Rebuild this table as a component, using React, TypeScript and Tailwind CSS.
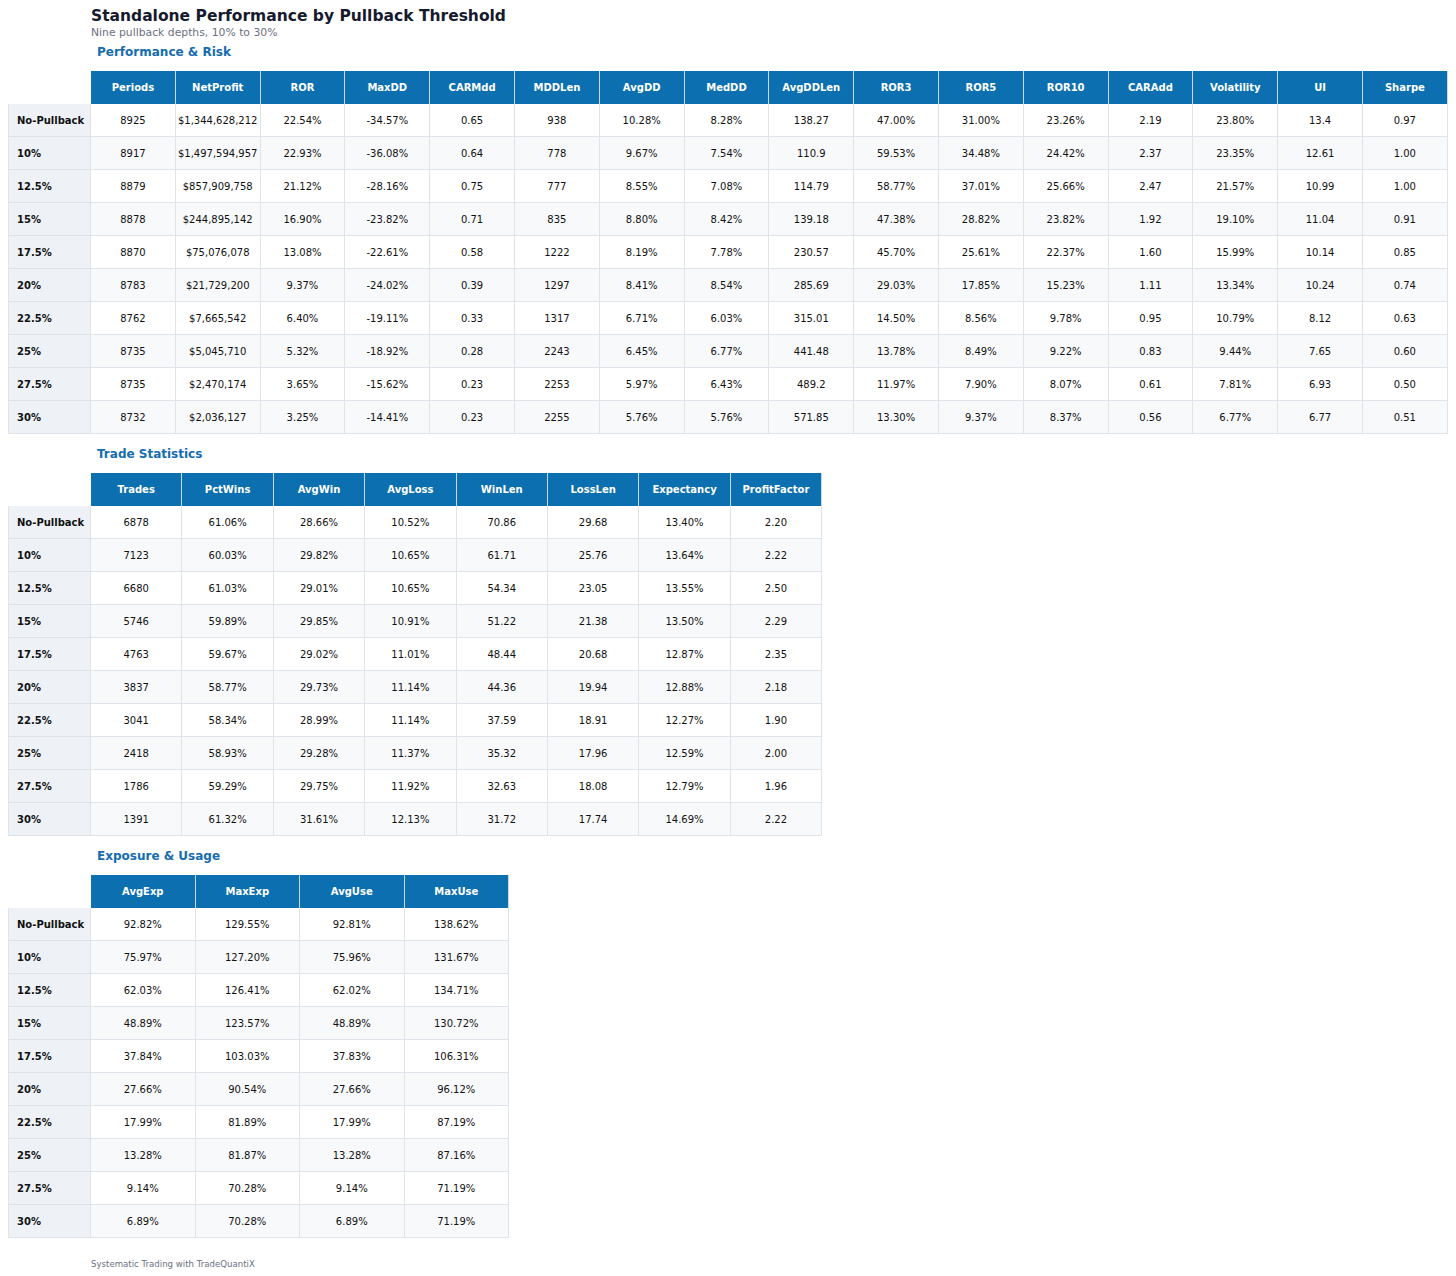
import React from 'react';

type Row = { label: string; values: string[] };

const LABELS = ['No-Pullback', '10%', '12.5%', '15%', '17.5%', '20%', '22.5%', '25%', '27.5%', '30%'];

const PERF_COLS = [
  'Periods', 'NetProfit', 'ROR', 'MaxDD', 'CARMdd', 'MDDLen', 'AvgDD', 'MedDD',
  'AvgDDLen', 'ROR3', 'ROR5', 'ROR10', 'CARAdd', 'Volatility', 'UI', 'Sharpe',
];

const PERF: string[][] = [
  ['8925', '$1,344,628,212', '22.54%', '-34.57%', '0.65', '938', '10.28%', '8.28%', '138.27', '47.00%', '31.00%', '23.26%', '2.19', '23.80%', '13.4', '0.97'],
  ['8917', '$1,497,594,957', '22.93%', '-36.08%', '0.64', '778', '9.67%', '7.54%', '110.9', '59.53%', '34.48%', '24.42%', '2.37', '23.35%', '12.61', '1.00'],
  ['8879', '$857,909,758', '21.12%', '-28.16%', '0.75', '777', '8.55%', '7.08%', '114.79', '58.77%', '37.01%', '25.66%', '2.47', '21.57%', '10.99', '1.00'],
  ['8878', '$244,895,142', '16.90%', '-23.82%', '0.71', '835', '8.80%', '8.42%', '139.18', '47.38%', '28.82%', '23.82%', '1.92', '19.10%', '11.04', '0.91'],
  ['8870', '$75,076,078', '13.08%', '-22.61%', '0.58', '1222', '8.19%', '7.78%', '230.57', '45.70%', '25.61%', '22.37%', '1.60', '15.99%', '10.14', '0.85'],
  ['8783', '$21,729,200', '9.37%', '-24.02%', '0.39', '1297', '8.41%', '8.54%', '285.69', '29.03%', '17.85%', '15.23%', '1.11', '13.34%', '10.24', '0.74'],
  ['8762', '$7,665,542', '6.40%', '-19.11%', '0.33', '1317', '6.71%', '6.03%', '315.01', '14.50%', '8.56%', '9.78%', '0.95', '10.79%', '8.12', '0.63'],
  ['8735', '$5,045,710', '5.32%', '-18.92%', '0.28', '2243', '6.45%', '6.77%', '441.48', '13.78%', '8.49%', '9.22%', '0.83', '9.44%', '7.65', '0.60'],
  ['8735', '$2,470,174', '3.65%', '-15.62%', '0.23', '2253', '5.97%', '6.43%', '489.2', '11.97%', '7.90%', '8.07%', '0.61', '7.81%', '6.93', '0.50'],
  ['8732', '$2,036,127', '3.25%', '-14.41%', '0.23', '2255', '5.76%', '5.76%', '571.85', '13.30%', '9.37%', '8.37%', '0.56', '6.77%', '6.77', '0.51'],
];

const TRADE_COLS = ['Trades', 'PctWins', 'AvgWin', 'AvgLoss', 'WinLen', 'LossLen', 'Expectancy', 'ProfitFactor'];

const TRADE: string[][] = [
  ['6878', '61.06%', '28.66%', '10.52%', '70.86', '29.68', '13.40%', '2.20'],
  ['7123', '60.03%', '29.82%', '10.65%', '61.71', '25.76', '13.64%', '2.22'],
  ['6680', '61.03%', '29.01%', '10.65%', '54.34', '23.05', '13.55%', '2.50'],
  ['5746', '59.89%', '29.85%', '10.91%', '51.22', '21.38', '13.50%', '2.29'],
  ['4763', '59.67%', '29.02%', '11.01%', '48.44', '20.68', '12.87%', '2.35'],
  ['3837', '58.77%', '29.73%', '11.14%', '44.36', '19.94', '12.88%', '2.18'],
  ['3041', '58.34%', '28.99%', '11.14%', '37.59', '18.91', '12.27%', '1.90'],
  ['2418', '58.93%', '29.28%', '11.37%', '35.32', '17.96', '12.59%', '2.00'],
  ['1786', '59.29%', '29.75%', '11.92%', '32.63', '18.08', '12.79%', '1.96'],
  ['1391', '61.32%', '31.61%', '12.13%', '31.72', '17.74', '14.69%', '2.22'],
];

const EXPO_COLS = ['AvgExp', 'MaxExp', 'AvgUse', 'MaxUse'];

const EXPO: string[][] = [
  ['92.82%', '129.55%', '92.81%', '138.62%'],
  ['75.97%', '127.20%', '75.96%', '131.67%'],
  ['62.03%', '126.41%', '62.02%', '134.71%'],
  ['48.89%', '123.57%', '48.89%', '130.72%'],
  ['37.84%', '103.03%', '37.83%', '106.31%'],
  ['27.66%', '90.54%', '27.66%', '96.12%'],
  ['17.99%', '81.89%', '17.99%', '87.19%'],
  ['13.28%', '81.87%', '13.28%', '87.16%'],
  ['9.14%', '70.28%', '9.14%', '71.19%'],
  ['6.89%', '70.28%', '6.89%', '71.19%'],
];

function toRows(data: string[][]): Row[] {
  return data.map((values, i) => ({ label: LABELS[i], values }));
}

interface StatTableProps {
  title: string;
  columns: string[];
  rows: Row[];
  cellW: string;
  first?: boolean;
}

const StatTable: React.FC<StatTableProps> = ({ title, columns, rows, cellW, first }) => (
  <section className={first ? 'mt-[5px]' : 'mt-[12px]'}>
    <h2 className="pl-[89px] text-[12px] leading-[16px] font-bold text-[#156cb0]">{title}</h2>
    <div className="mt-[11px] flex flex-col items-start">
      <div className="flex">
        <div className="w-[83px] shrink-0" />
        {columns.map((c) => (
          <div
            key={c}
            className={`${cellW} h-[33px] shrink-0 flex items-center justify-center bg-[#0b6fb0] border-r border-[#c9d9ea] text-white font-bold text-[10px]`}
          >
            {c}
          </div>
        ))}
      </div>
      {rows.map((r, i) => (
        <div key={r.label} className="flex">
          <div className="w-[83px] h-[33px] shrink-0 flex items-center pl-[8px] bg-[#eef1f6] border-l border-b border-r border-[#dfe3ea] font-bold text-[10px] text-[#111]">
            {r.label}
          </div>
          {r.values.map((v, j) => (
            <div
              key={j}
              className={`${cellW} h-[33px] shrink-0 flex items-center justify-center border-r border-b border-[#dfe3ea] text-[10px] text-[#111] whitespace-nowrap ${i % 2 === 1 ? 'bg-[#f8f9fb]' : 'bg-white'}`}
            >
              {v}
            </div>
          ))}
        </div>
      ))}
    </div>
  </section>
);

export default function App() {
  return (
    <div className="w-[1456px] min-h-[1276px] bg-white pl-[8px] pt-[6px] font-['DejaVu_Sans',sans-serif]">
      <header className="pl-[83px]">
        <h1 className="text-[15.5px] leading-[20px] font-bold text-[#161a2e]">Standalone Performance by Pullback Threshold</h1>
        <p className="text-[10.8px] leading-[13px] text-[#6b7080]">Nine pullback depths, 10% to 30%</p>
      </header>
      <StatTable first title="Performance & Risk" columns={PERF_COLS} rows={toRows(PERF)} cellW="w-[84.8px]" />
      <StatTable title="Trade Statistics" columns={TRADE_COLS} rows={toRows(TRADE)} cellW="w-[91.4px]" />
      <StatTable title="Exposure & Usage" columns={EXPO_COLS} rows={toRows(EXPO)} cellW="w-[104.5px]" />
      <footer className="pl-[83px] mt-[21px] text-[8.6px] leading-[10px] text-[#6b7080]">Systematic Trading with TradeQuantiX</footer>
    </div>
  );
}
